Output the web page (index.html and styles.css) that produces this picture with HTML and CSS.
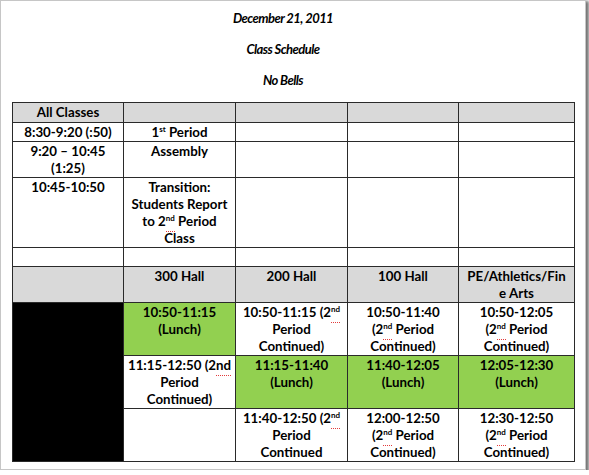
FILE: index.html
```html
<!DOCTYPE html>
<html>
<head>
<meta charset="utf-8">
<link rel="stylesheet" href="styles.css">
</head>
<body>
<div class="frame">
  <div class="titles">
    <p class="title">December 21, 2011</p>
    <p class="title">Class Schedule</p>
    <p class="title">No Bells</p>
  </div>
  <table class="sched">
    <colgroup>
      <col class="c1"><col class="c2"><col class="c3"><col class="c4"><col class="c5">
    </colgroup>
    <tr class="r1 gray">
      <td>All Classes</td><td></td><td></td><td></td><td></td>
    </tr>
    <tr class="r2">
      <td>8:30-9:20 (:50)</td><td>1<sup>st</sup> Period</td><td></td><td></td><td></td>
    </tr>
    <tr class="r3">
      <td>9:20 – 10:45<br>(1:25)</td><td>Assembly</td><td></td><td></td><td></td>
    </tr>
    <tr class="r4">
      <td>10:45-10:50</td><td>Transition:<br>Students Report<br>to 2<sup class="sp">nd</sup> Period<br>Class</td><td></td><td></td><td></td>
    </tr>
    <tr class="r5">
      <td></td><td></td><td></td><td></td><td></td>
    </tr>
    <tr class="r6 gray">
      <td></td><td>300 Hall</td><td>200 Hall</td><td>100 Hall</td><td>PE/Athletics/Fin<br>e Arts</td>
    </tr>
    <tr class="r7">
      <td class="black" rowspan="3"></td>
      <td class="green">10:50-11:15<br>(Lunch)</td>
      <td>10:50-11:15 (2<sup class="sp">nd</sup><br>Period<br>Continued)</td>
      <td>10:50-11:40<br>(2<sup class="sp">nd</sup> Period<br>Continued)</td>
      <td>10:50-12:05<br>(2<sup class="sp">nd</sup> Period<br>Continued)</td>
    </tr>
    <tr class="r8">
      <td>11:15-12:50 (2<span class="spn">nd</span><br>Period<br>Continued)</td>
      <td class="green">11:15-11:40<br>(Lunch)</td>
      <td class="green">11:40-12:05<br>(Lunch)</td>
      <td class="green">12:05-12:30<br>(Lunch)</td>
    </tr>
    <tr class="r9">
      <td></td>
      <td>11:40-12:50 (2<sup class="sp">nd</sup><br>Period<br>Continued</td>
      <td>12:00-12:50<br>(2<sup class="sp">nd</sup> Period<br>Continued)</td>
      <td>12:30-12:50<br>(2<sup class="sp">nd</sup> Period<br>Continued)</td>
    </tr>
  </table>
</div>
</body>
</html>
```
FILE: styles.css
```css
html, body {
  margin: 0;
  padding: 0;
  background: #fff;
}
body {
  font-family: Lato, "Liberation Sans", sans-serif;
  color: #000;
}
.frame {
  box-sizing: border-box;
  width: 586px;
  height: 470px;
  border: 1px solid #c6c6c6;
  box-shadow: 2px 2px 3px 1px rgba(0, 0, 0, 0.55);
  background: #fff;
  overflow: hidden;
}
.titles {
  padding: 2px 20px 0 0;
  margin-bottom: 6px;
}
.title {
  margin: 0;
  text-align: center;
  font-weight: bold;
  font-style: italic;
  font-size: 13px;
  letter-spacing: -0.55px;
  line-height: 31px;
}
.sched {
  margin-left: 11px;
  border-collapse: collapse;
  table-layout: fixed;
  width: 562px;
  font-size: 13.3px;
  font-weight: bold;
  line-height: 17px;
}
.c1 { width: 111px; }
.c2 { width: 112px; }
.c3 { width: 112px; }
.c4 { width: 111px; }
.c5 { width: 116px; }
.sched td {
  border: 1px solid #2a2a2a;
  padding: 1px 2px 0;
  text-align: center;
  vertical-align: top;
  overflow: hidden;
}
.gray td { background: #d9d9d9; }
.sched td.green { background: #92d050; }
.sched td.black { background: #000; }
.r1 { height: 20px; }
.r2 { height: 19px; }
.r3 { height: 34px; }
.r4 { height: 69px; }
.r5 { height: 19px; }
.r6 { height: 33px; }
.r7 { height: 53px; }
.r8 { height: 51px; }
.r9 { height: 52px; }
.r1 td { vertical-align: middle; padding-top: 0; }
sup {
  font-size: 8px;
  line-height: 0;
  vertical-align: 5px;
}
.sp, .spn {
  position: relative;
}
.sp::after, .spn::after {
  content: "";
  position: absolute;
  left: 0;
  right: 0;
  border-bottom: 1px dotted #e23b3b;
}
.sp::after { bottom: -9px; }
.spn::after { bottom: -3px; }
```
